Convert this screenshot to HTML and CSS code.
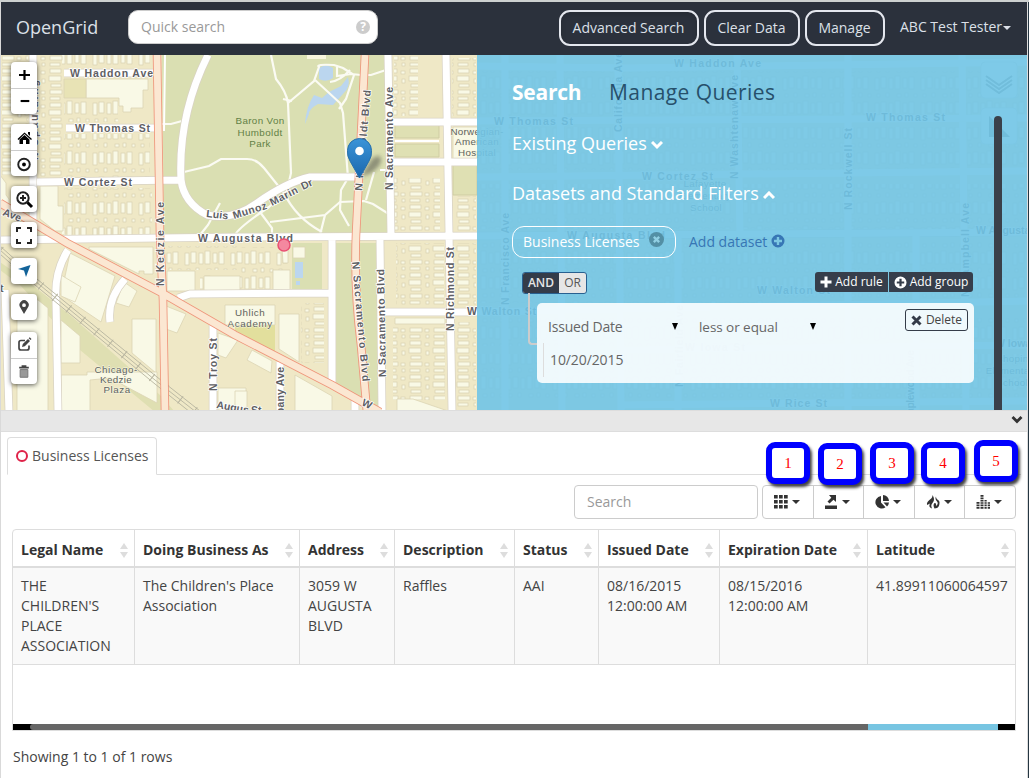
FILE: index.html
```html
<!DOCTYPE html>
<html lang="en">
<head>
<meta charset="utf-8">
<title>OpenGrid</title>
<link rel="stylesheet" href="styles.css">
</head>
<body>
<svg class="defs" width="0" height="0" aria-hidden="true">
  <defs>
    <symbol id="plus-circle" viewBox="0 0 14 14"><path fill-rule="evenodd" d="M7 .5a6.500 6.500 0 1 0 0 13a6.500 6.500 0 0 0 0-13zM5.800 3h2.400v2.800H11v2.400H8.200V11H5.800V8.200H3V5.800h2.800z"/></symbol>
  </defs>
</svg>
<div class="app">
  <header class="bar">
    <span class="brand">OpenGrid</span>
    <div class="quick"><span>Quick search</span><span class="help">?</span></div>
    <nav class="nav">
      <button class="nav-btn pressed">Advanced Search</button>
      <button class="nav-btn clear">Clear Data</button>
      <button class="nav-btn manage">Manage</button>
      <span class="user">ABC Test Tester<i class="caret"></i></span>
    </nav>
  </header>

  <main class="map-area">
    <svg class="map" viewBox="1 55 1026 355" width="1026" height="355">
      <defs>
        <pattern id="lots" width="46" height="25" patternUnits="userSpaceOnUse">
          <g class="bld"><rect x="1" y="3" width="4" height="12"/><rect x="7" y="2" width="5" height="11"/><rect x="15" y="3" width="4" height="11"/><rect x="21" y="1" width="5" height="13"/><rect x="29" y="3" width="4" height="10"/><rect x="35" y="2" width="5" height="12"/><rect x="3" y="19" width="3" height="3"/><rect x="12" y="18" width="3" height="4"/><rect x="23" y="19" width="4" height="3"/><rect x="31" y="18" width="3" height="4"/><rect x="40" y="19" width="3" height="3"/></g>
        </pattern>
        <pattern id="rows" width="24" height="34" patternUnits="userSpaceOnUse">
          <g class="bld"><rect x="2" y="1" width="11" height="4"/><rect x="1" y="8" width="12" height="5"/><rect x="3" y="16" width="10" height="3"/><rect x="2" y="22" width="12" height="4"/><rect x="2" y="29" width="10" height="3"/><rect x="17" y="3" width="4" height="3"/><rect x="18" y="11" width="3" height="4"/><rect x="17" y="23" width="4" height="3"/><rect x="18" y="29" width="3" height="3"/></g>
        </pattern>
        <linearGradient id="pin" x1="0" y1="0" x2="0" y2="1"><stop offset="0" stop-color="#3b94d8"/><stop offset="1" stop-color="#1b67ad"/></linearGradient>
        <filter id="soft" x="-50%" y="-50%" width="200%" height="200%"><feGaussianBlur stdDeviation="2"/></filter>
      </defs>
      <rect x="0" y="50" width="1029" height="362" fill="#efe8c6"/>
      <!-- park land -->
      <path class="park" d="M162 55H386L389 234L360 235L164 236z"/>
      <path class="park" d="M334 243H379L381 410H372L334 386z"/>
      <path class="park" d="M292 243h30v46h-30z"/>
      <path d="M0 262L30 283L70 315L160 395L175 412H155L80 350L20 285L0 270z" fill="#dfdfb2"/>
      <path d="M235 323h40v37l-40-26z" fill="#e2df9d"/>
      <g class="block"><path d="M395 125h44v13h-44zM395 144h44v13h-44z"/><path d="M453 165h24v30h-24z"/></g>
      <!-- building lots -->
      <g fill="url(#lots)">
        <rect x="62" y="55" width="88" height="12"/><rect x="64" y="100" width="54" height="22"/><rect x="64" y="134" width="86" height="44"/><rect x="64" y="188" width="88" height="48"/>
        <rect x="166" y="246" width="72" height="24"/><rect x="200" y="275" width="38" height="16"/><rect x="237" y="247" width="50" height="42"/><rect x="62" y="228" width="60" height="6"/>
      </g>
      <g fill="url(#rows)">
        <rect x="2" y="55" width="26" height="120"/><rect x="39" y="55" width="24" height="122"/><rect x="394" y="56" width="24" height="60"/><rect x="452" y="58" width="24" height="58"/><rect x="394" y="178" width="46" height="54"/><rect x="454" y="196" width="22" height="38"/><rect x="396" y="243" width="48" height="62"/><rect x="456" y="243" width="20" height="62"/><rect x="393" y="326" width="52" height="74"/><rect x="456" y="322" width="20" height="86"/><rect x="301" y="303" width="23" height="60"/>
      </g>
      <g class="bld">
        <path d="M86 79h62v11h-5v18h-12v4h-8v-6h-4v-8H86z"/>
        <path d="M64 79h22v19H64z" style="fill:#e8e3b5"/>
        <path d="M40 186h18v20h5v25H55l-15-12z"/><path d="M0 175l6 8v12l3 4v18l-9-10z"/>
        <path d="M89 247h64v27h-9v-3h-5v3l-50-25z"/><path d="M70 253l45 23-14 46-40-27z"/><path d="M61 275l20 12-6 15-14-6z"/><path d="M124 282l13 9-8 16-13-4z"/>
        <path d="M132 319h24v54l-24-20z"/><path d="M61 320l19 16v27H61z"/><path d="M61 375h26v-3h70v31l-47-25-20 2v34H61z"/><path d="M38 300l10 8v104H17V295z"/>
        <path d="M166 306l20 8-9 19-11-4z"/><path d="M167 271h28v20h-28z"/><path d="M204 276h36v15h-36z"/><path d="M225 305h50v20h-50z"/><path d="M279 314h20v48l-20-13z"/><path d="M273 270h17v20h-17z"/><path d="M293 247h12v11h-12z"/><path d="M252 350l20 11-1 12-24-13z"/>
        <path d="M218 333l20 7-12 18-8-3z"/><path d="M218 388h28v22h-28z"/><path d="M235 391h12v22h-12z"/><path d="M295 375l37 21v16h-37z"/><path d="M397 399h16l35 12h-51z"/><path d="M453 127h25v33h-25z"/>
        <path d="M282 248h6v15h-5z"/><path d="M395 318h50v6h-50z"/>
      </g>
      <path d="M307 55h19v4h-19z" fill="#f8f5dc"/>
      <!-- water -->
      <g fill="#bbd6ef"><path d="M319 68q7-5 14 0v10q-7 5-14 1z"/><path d="M348 77q3 10-5 17l-10 11-15-1q-9 5-9 10l-4 10q1-17 9-29l8 3 7-6 12-6z"/><path d="M295 262h8v16h-8zM296 281h4v4h-4z"/></g>
      <!-- park paths -->
      <g class="path">
        <path d="M271 55l5 24q10 12 12 24l3 70-4 18-18 16q-30 20-34 28"/><path d="M288 103l26-22 5-14q-4-3 15-2l9 3 11 7-8 24-7 10M283 99l9 2M315 80l25 23 3 10 5 65-7 12-1 20 9 16M337 66v10l14-2 10 1 10 0 15-5M330 82q10-1 20-12"/>
        <path d="M184 172l25-6 12-7h26q10 0 17 9l20 25q12 25 38 39M270 222l55-7 15-13 24-1 9 3 19 12M325 215l-5 20M366 200l8-28M162 124h9l11-3M257 208l15 20v8M220 203l-12 22-8 10"/>
      </g>
      <!-- streets: casing, then fill -->
      <g class="street-minor">
        <path d="M165 55l-1 76M395 141h44M380 170h12"/>
      </g>
      <g class="casing">
        <path d="M33 55V240M64 73h90M66 128h88M37 182l144-2M0 240l240-3 237-1 550-4M208 55q-30 60-27 125 3 23 26 35 25 6 50-12 30-21 53-26h47M388 55l3 180M446 55l6 355M391 122h86M391 162h86M384 312h93M380 240l2 170M332 240v146M178 298l12-4 142-1M213 325v87M280 362v50M355 398v14M68 250q-14 22-12 50l2 112M125 279q-18 20-15 43M5 290l4 122"/>
      </g>
      <g class="white">
        <path d="M33 55V240M64 73h90M66 128h88M37 182l144-2M0 240l240-3 237-1 550-4M208 55q-30 60-27 125 3 23 26 35 25 6 50-12 30-21 53-26h47M388 55l3 180M446 55l6 355M391 122h86M391 162h86M384 312h93M380 240l2 170M332 240v146M178 298l12-4 142-1M213 325v87M280 362v50M355 398v14M68 250q-14 22-12 50l2 112M125 279q-18 20-15 43M5 290l4 122"/>
      </g>
      <g class="rail"><path d="M0 246L37 279L157 377L200 411M0 250L35 281L155 380L196 412M0 254L35 285L155 384L190 412"/><path class="ties" d="M0 250L35 281L155 380L196 412"/></g>
      <g class="main-edge"><path d="M157 55L160 235L163 300L165 412M365 55L356 235Q354 290 361 345L367 412M0 203L67 243L162 293L235 335L332 385L380 412"/></g>
      <g class="main-fill"><path d="M157 55L160 235L163 300L165 412M365 55L356 235Q354 290 361 345L367 412M0 203L67 243L162 293L235 335L332 385L380 412"/></g>
      <!-- eastern blocks -->
      <g fill="url(#lots)"><rect x="480" y="71" width="545" height="45"/><rect x="480" y="127" width="545" height="43"/><rect x="480" y="184" width="545" height="45"/><rect x="480" y="241" width="545" height="62"/><rect x="480" y="318" width="545" height="28"/><rect x="480" y="354" width="545" height="45"/></g>
      <g class="white"><path d="M477 66l150 2 400-6M477 121l550-3M477 177l550-6M477 312l550-11M620 350l407-5M620 405l407-4M505 55v355M560 55l2 355M618 55l3 355M737 55l3 180M678 232v178M848 55v355M916 235v175M962 55l4 355"/></g>
      <!-- labels -->
      <g class="label">
        <text x="70" y="76.500" textLength="83">W Haddon Ave</text><text x="75" y="131.500" textLength="75">W Thomas St</text><text x="64" y="185.500" textLength="68">W Cortez St</text><text x="198" y="242" textLength="95">W Augusta Blvd</text><text x="467" y="315" textLength="69">W Walton St</text>
        <text transform="translate(164 286) rotate(-90)" textLength="84">N Kedzie Ave</text><text transform="translate(362 191) rotate(-85)" textLength="101">N Humboldt Blvd</text><text transform="translate(393 190) rotate(-90)" textLength="103">N Sacramento Ave</text><text transform="translate(352 262) rotate(85)" textLength="120">N Sacramento Blvd</text><text transform="translate(386 377) rotate(-91)" textLength="108">N Sacramento Blvd</text><text transform="translate(454 331) rotate(-90)" textLength="84">N Richmond St</text><text transform="translate(217 391) rotate(-90)" textLength="53">N Troy St</text><text transform="translate(284 425) rotate(-90)" textLength="58">Albany Ave</text><text transform="translate(38 160) rotate(-90)" textLength="80">N Spaulding</text>
        <text transform="translate(2 215) rotate(21)">Ave</text><text transform="translate(206 217) rotate(6)" textLength="22">Luis</text><text transform="translate(234 219) rotate(-17)" textLength="35">Munoz</text><text transform="translate(272 206) rotate(-27)" textLength="30">Marin</text><text transform="translate(303 190) rotate(-25)">Dr</text><text transform="translate(361 405) rotate(25)">W</text><text x="0" y="292">t</text><text transform="translate(216 408) rotate(10)">Augus</text><text x="251" y="414">St</text>
        <text x="674" y="67" textLength="87">W Haddon Ave</text><text x="494" y="125" textLength="79">W Thomas St</text><text x="866" y="121" textLength="79">W Thomas St</text><text x="642" y="180" textLength="71">W Cortez St</text><text x="567" y="239" textLength="98">W Augusta Blvd</text><text x="976" y="234">W Augusta</text><text x="757" y="294" textLength="73">W Walton St</text><text x="685" y="351" textLength="60">W Iowa St</text><text x="995" y="347">W Iowa</text><text x="770" y="407" textLength="57">W Rice St</text>
        <text transform="translate(622 132) rotate(-90)" textLength="80">California Ave</text><text transform="translate(738 179) rotate(-90)" textLength="104">N Washtenaw Ave</text><text transform="translate(852 210) rotate(-90)" textLength="82">N Rockwell St</text><text transform="translate(969 297) rotate(-90)" textLength="94">N Campbell Ave</text><text transform="translate(509 305) rotate(-90)" textLength="92">N Francisco Ave</text><text transform="translate(683 387) rotate(-90)" textLength="82">N Fairfield Ave</text><text transform="translate(914 422) rotate(-90)" textLength="72">Maplewood Ave</text>
      </g>
      <g class="place green"><text x="260" y="124" textLength="49">Baron Von</text><text x="260" y="135.500" textLength="45">Humboldt</text><text x="260" y="147">Park</text></g>
      <g class="place"><text x="250" y="316" textLength="30">Uhlich</text><text x="250" y="326.500" textLength="45">Academy</text><text x="116" y="373" textLength="43">Chicago-</text><text x="116" y="383" textLength="32">Kedzie</text><text x="117" y="393" textLength="27">Plaza</text><text x="477" y="135">Norwegian-</text><text x="477" y="145">American</text><text x="477" y="156">Hospital</text><text x="705" y="187">Lafayette</text><text x="705" y="199">Elementary</text><text x="706" y="211">School</text><text x="1012" y="362">Chopin</text><text x="1012" y="374">Elementary</text><text x="1012" y="386">School</text></g>
      <circle cx="284" cy="245" r="6" fill="#f4889f" stroke="#e84f72" stroke-width="1.500"/>
      <path d="M360 177l12-18q8-6 9 0t-10 14z" fill="#333" opacity=".45" filter="url(#soft)"/>
      <path d="M359.500 178L350 161Q347 156 347.500 150.500A12 12 0 0 1 371.500 150.500Q372 156 369 161z" fill="url(#pin)" stroke="#2670ad"/>
      <circle cx="359.500" cy="151" r="4.300" fill="#fff"/>
      <g class="ghost-tools"><rect x="981" y="62" width="36" height="36" rx="4"/><rect x="981" y="108" width="36" height="36" rx="4"/><path class="layers" d="M986 76l13 9 13-9M986 80l13 9 13-9M986 84l13 9 13-9"/><path class="ruler" d="M989 116v21h21z"/></g>
    </svg>

    <div class="controls">
      <div class="ctl"><svg viewBox="0 0 26 26"><path class="s3" d="M8 13h11M13.500 8v10"/></svg><svg viewBox="0 0 26 26"><path class="s3" d="M9.500 12.500h9"/></svg></div>
      <div class="ctl"><svg viewBox="0 0 26 26"><path d="M6.500 15L13.500 8.500 21 15l-1 1-6.500-6-6 6zM17 8h2v4l-2-2zM8.500 15.500l5-4.500 5 4.500V20H15v-4h-3v4H8.500z"/></svg><svg viewBox="0 0 26 26"><circle cx="13" cy="14" r="6" class="s2"/><circle cx="13" cy="14" r="2"/></svg></div>
      <div class="ctl"><svg viewBox="0 0 26 26"><circle cx="12" cy="12" r="5.700" class="s2"/><path class="s2" d="M9 12h6M12 9v6"/><path class="s3 thick" d="M16.500 16.500l4.500 4.500"/></svg></div>
      <div class="ctl"><svg viewBox="0 0 26 26"><path class="s2" d="M6 10V6h4M16 6h4v4M20 17v4h-4M10 21H6v-4"/></svg></div>
      <div class="ctl"><svg viewBox="0 0 26 26"><path fill="#136399" d="M19.500 7l-4.500 12-2-6.500-6-1.500z"/></svg></div>
      <div class="ctl"><svg viewBox="0 0 26 26"><path fill="#444" fill-rule="evenodd" d="M13 20L9.300 13.500A4.600 4.600 0 1 1 16.900 13.500zM13 9.300a1.900 1.900 0 1 0 0 3.800a1.900 1.900 0 0 0 0-3.800z"/></svg></div>
      <div class="ctl last"><svg viewBox="0 0 26 26"><path d="M14 8.500H10q-2 0-2 2V16q0 2 2 2h6q2 0 2-2v-2.500" fill="none" stroke="#444" stroke-width="1.700"/><path fill="#444" d="M11 15l.8-3L17 7l2 2-5.200 5.200zM17.700 6.300l1-1L20.500 7l-1 1z"/></svg><svg viewBox="0 0 26 26"><path fill="#444" d="M8 8h10v2H8zM10.500 6.500h5V8h-5z"/><path fill="#999" stroke="#777" d="M9 11h8v8H9z"/></svg></div>
    </div>

    <section class="panel">
      <div class="panel-tabs"><b>Search</b><span>Manage Queries</span></div>
      <h3 class="existing">Existing Queries<svg width="12" height="9" viewBox="0 0 12 9"><path d="M1 1l5 5 5-5"/></svg></h3>
      <h3 class="datasets">Datasets and Standard Filters<svg width="12" height="9" viewBox="0 0 12 9"><path d="M1 7l5-5 5 5"/></svg></h3>
      <div class="sets"><span class="pill">Business Licenses<svg width="15" height="15" viewBox="0 0 14 14"><circle cx="7" cy="7" r="7"/><path d="M4.500 4.500l5 5M9.500 4.500l-5 5"/></svg></span><a class="add-set">Add dataset<svg width="14" height="14"><use href="#plus-circle"/></svg></a></div>
      <div class="group-head"><div class="andor"><b>AND</b><span>OR</span></div>
        <div class="adders"><span class="add-rule"><svg width="12" height="12"><path d="M4.500 0.500h3v4h4v3h-4v4h-3v-4h-4v-3h4z"/></svg>Add rule</span><span class="add-group"><svg width="13" height="13"><use href="#plus-circle" width="13" height="13"/></svg>Add group</span></div></div>
      <div class="rule">
        <i class="elbow"></i>
        <div class="rule-row"><span class="sel field">Issued Date<i></i></span><span class="sel op">less or equal<i></i></span><span class="delete"><svg width="11" height="11"><path d="M1.500 1.500l8 8M9.500 1.500l-8 8"/></svg>Delete</span></div>
        <div class="value">10/20/2015</div>
      </div>
      <i class="panel-scroll"></i>
    </section>
  </main>

  <div class="divider"><svg width="12" height="10" viewBox="0 0 12 10"><path d="M1.500 2l4.500 4.500L10.500 2"/></svg></div>

  <section class="results">
    <div class="tabs"><div class="tab"><i class="ring"></i>Business Licenses</div></div>
    <div class="tools">
      <div class="filter">Search</div>
      <div class="group">
        <span><svg width="14" height="14"><path d="M0 0h3.700v3.500H0zM5 0h3.700v3.500H5zM10 0h3.700v3.500H10zM0 5h3.700v3.500H0zM5 5h3.700v3.500H5zM10 5h3.700v3.500H10zM0 10h3.700v3.500H0zM5 10h3.700v3.500H5zM10 10h3.700v3.500H10z"/></svg><i class="caret"></i></span>
        <span><svg width="14" height="14"><path d="M1 10.500h12V14H1zM5 0h7v7L9.500 4.800 5.500 8.500 3.500 6.500 7.300 2.800z"/></svg><i class="caret"></i></span>
        <span><svg width="14" height="14"><path d="M6 1v6.500l4.500 4.800A6.300 6.300 0 1 1 6 1zM8 0a6.200 6.200 0 0 1 6 6H8zM8.500 7.500H14a6 6 0 0 1-2 4z"/></svg><i class="caret"></i></span>
        <span><svg width="14" height="14"><path d="M6.500 0c2.500 4 1.500 6 0 8s-1.500 3-.5 5.500C3 12.500 3 10.500 4 8.500L1 10c-.5-2.500 1-4 3-5.500S6.500 2 6.500 0zM10 1.500c-1 2-.5 3 1 5s.5 3-1 4.500c.5-2.500-.5-3.500-1.500-3-1.500 1.500-1 3.500 0 5.500 4 0 5-3 5-6S10 5 10 1.500z"/></svg><i class="caret"></i></span>
        <span><svg width="14" height="14"><path d="M.5 7h3v1.800h-3zM.5 9.500h3v1.700h-3zM.5 12h3v1.800h-3zM4.500 0h3v1.800h-3zM4.500 2.500h3v1.800h-3zM4.500 5h3v1.500h-3zM4.500 7.200h3v1.600h-3zM4.500 9.500h3v1.700h-3zM4.500 12h3v1.800h-3zM8.500 5h2.200v1.500H8.500zM8.500 7.200h2.200v1.600H8.500zM8.500 9.500h2.200v1.700H8.500zM8.500 12h2.200v1.800H8.500zM11.700 7.200H14v1.600h-2.300zM11.700 9.500H14v1.700h-2.300zM11.700 12H14v1.800h-2.300z"/></svg><i class="caret"></i></span>
      </div>
    </div>
    <div class="grid-wrap">
      <table class="grid">
        <colgroup><col style="width:121px"><col style="width:165px"><col style="width:95px"><col style="width:120px"><col style="width:84px"><col style="width:121px"><col style="width:148px"><col style="width:148px"></colgroup>
        <thead><tr><th>Legal Name</th><th>Doing Business As</th><th>Address</th><th>Description</th><th>Status</th><th>Issued Date</th><th>Expiration Date</th><th>Latitude</th></tr></thead>
        <tbody><tr><td>THE CHILDREN'S PLACE ASSOCIATION</td><td>The Children's Place Association</td><td>3059 W AUGUSTA BLVD</td><td>Raffles</td><td>AAI</td><td>08/16/2015 12:00:00 AM</td><td>08/15/2016 12:00:00 AM</td><td>41.89911060064597</td></tr></tbody>
      </table>
      <div class="hscroll"><i></i><i class="thumb"></i><i class="track"></i><i></i></div>
    </div>
    <p class="count">Showing 1 to 1 of 1 rows</p>
  </section>

  <span class="note n1">1</span><span class="note n2">2</span><span class="note n3">3</span><span class="note n4">4</span><span class="note n5">5</span>
</div>
</body>
</html>
```
FILE: styles.css
```css
* { box-sizing: border-box; }
body { margin: 0; background: #fff; font: 14px/20px "Open Sans", sans-serif; color: #444; }
.defs { position: absolute; }
.app { position: relative; width: 1029px; height: 778px; overflow: hidden; padding-left: 1px; border-top: 2px solid #cdd1d0; background: linear-gradient(90deg, #d9d9d9 1px, #fff 1px, #fff 1027px, #ddd 1027px, #ddd 1028px, #253642 1028px); }
i { font-style: normal; }

/* top bar */
.bar { display: flex; width: 1026px; height: 53px; padding: 8px 15px 0; background: #2b313c; color: #dce0e8; }
.brand { width: 112px; font-size: 18px; line-height: 34px; white-space: nowrap; }
.quick { display: flex; justify-content: space-between; align-items: center; width: 250px; height: 34px; padding: 0 7px 0 12px; border: 1px solid #ccc; border-radius: 10px; background: #fff; color: #999; }
.help { width: 14px; height: 14px; border-radius: 50%; background: #ccc; color: #fff; font: bold 12px/14px "Open Sans", sans-serif; text-align: center; }
.nav { display: flex; gap: 5px; margin-left: 181px; }
.nav-btn { width: 140px; height: 36px; padding: 0 1px 0 0; border: 2px solid #e4e7ee; border-radius: 11px; background: transparent; color: #dce0e8; font: 14px/32px "Open Sans", sans-serif; white-space: nowrap; }
.pressed { box-shadow: inset 0 3px 5px rgba(0,0,0,.125); }
.clear { width: 96px; }
.manage { width: 80px; }
.user { margin-left: 10px; line-height: 34px; white-space: nowrap; }
.caret { display: inline-block; border: 4px solid transparent; border-top-color: currentColor; border-bottom: 0; vertical-align: middle; }
.user .caret { margin-left: 1px; }

/* map */
.map-area { position: relative; width: 1026px; height: 355px; overflow: hidden; }
.map { display: block; }
.park { fill: #dadfb2; }
.block { fill: #dfe0b3; stroke: #cfcda2; }
.bld { fill: #f9f9e6; stroke: #dcd4b4; stroke-width: .8; }
.path { fill: none; stroke: #fbfbf3; stroke-width: 2.200; }
.street-minor { fill: none; stroke: #fff; stroke-width: 2; }
.casing { fill: none; stroke: #d9d3c4; stroke-width: 8.500; }
.white { fill: none; stroke: #fff; stroke-width: 7; }
.rail { fill: none; stroke: #b7b49f; stroke-width: .9; }
.rail .ties { stroke-width: 9; stroke-dasharray: 1 17; }
.main-edge { fill: none; stroke: #ef957b; stroke-width: 8.500; }
.main-fill { fill: none; stroke: #fbe7d2; stroke-width: 6.800; }
.label { font: bold 10.500px "Liberation Sans", sans-serif; fill: #606064; stroke: #fff; stroke-width: 1.500; paint-order: stroke; }
.place { font: 9.800px "Liberation Sans", sans-serif; fill: #5d625d; text-anchor: middle; letter-spacing: .3px; stroke: #f8f7e2; stroke-width: 1; paint-order: stroke; }
.green { fill: #627f45; stroke: none; }
.ghost-tools rect { fill: #fff; stroke: #ddd; }
.layers { fill: none; stroke: #777; stroke-width: 2; }
.ruler { fill: #777; }
.controls { position: absolute; top: 7px; left: 10px; display: flex; flex-direction: column; gap: 10px; }
.ctl { display: flex; flex-direction: column; width: 26px; border-radius: 4px; background: #fff; box-shadow: 0 1px 5px rgba(0,0,0,.65); }
.ctl svg { width: 26px; height: 26px; }
.ctl svg + svg { border-top: 1px solid #ccc; }
.last { margin-top: 2px; }
.s2 { fill: none; stroke: #222; stroke-width: 2; }
.s3 { fill: none; stroke: #000; stroke-width: 2.200; }
.thick { stroke-width: 3; }

/* search panel */
.panel { position: absolute; top: 0; right: 0; width: 550px; height: 355px; padding: 22px 53px 0 35px; background: rgba(112,196,229,.9); color: #fff; white-space: nowrap; }
.panel svg { fill: currentColor; }
.panel-tabs { display: flex; height: 54px; font-size: 21px; line-height: 30px; color: #27506b; }
.panel-tabs b { width: 97px; color: #fff; letter-spacing: -.25px; }
.panel-tabs span { letter-spacing: .42px; }
.panel h3 { margin: 0; font-weight: 400; font-size: 18px; line-height: 25px; }
.panel h3 svg { margin-left: 4px; fill: none; stroke: #fff; stroke-width: 3; }
.existing { height: 50px; }
.datasets { height: 45px; }
.sets { display: flex; gap: 13px; height: 46px; line-height: 31px; }
.pill { width: 164px; height: 32px; padding-left: 10px; border: 1px solid #fff; border-radius: 12px; line-height: 30px; }
.pill svg { margin-left: 10px; fill: #538fa5; stroke: none; vertical-align: 0; }
.pill svg path { stroke: #91cfe3; stroke-width: 2.200; }
.add-set { color: #3776b5; }
.add-set svg { margin-left: 4px; vertical-align: -1px; }
.group-head { display: flex; justify-content: space-between; height: 31px; padding: 0 1px 0 10px; font-size: 12px; }
.andor { display: flex; width: 65px; height: 22px; border: 1px solid #286090; border-radius: 3px; overflow: hidden; line-height: 19px; text-align: center; background: #e6e6e6; color: #555; }
.andor b { width: 36px; background: #343c49; color: #e6e6e6; font-weight: 600; }
.andor span { flex: 1; }
.adders { display: flex; gap: 1px; height: 20px; line-height: 20px; }
.adders span { display: flex; align-items: center; justify-content: center; gap: 3px; width: 84px; background: #363e4b; }
.adders .add-rule { width: 73px; border-radius: 3px 0 0 3px; }
.adders .add-group { border-radius: 0 3px 3px 0; }
.rule { position: relative; width: 437px; height: 80px; margin-left: 25px; padding: 6px 6px 0; border-radius: 5px; background: rgba(255,255,255,.88); color: #666; }
.elbow { position: absolute; left: -9px; top: -10px; width: 9px; height: 52px; border: solid #ccc; border-width: 0 0 2px 2px; border-radius: 0 0 0 4px; }
.rule-row { display: flex; height: 34px; line-height: 36px; }
.sel { display: flex; align-items: center; justify-content: space-between; height: 36px; }
.sel i { margin-top: -2px; border: solid transparent; border-width: 7px 3px 0; border-top-color: #000; }
.field { width: 135px; padding-left: 5px; letter-spacing: -.2px; }
.op { width: 117px; margin-left: 21px; font-size: 13.500px; letter-spacing: -.05px; }
.delete { display: flex; align-items: center; justify-content: center; gap: 4px; width: 63px; height: 22px; margin-left: auto; border: 1px solid #343c49; border-radius: 3px; font-size: 12px; color: #444; }
.delete svg { stroke: #343c49; stroke-width: 3; }
.value { height: 34px; padding-left: 6px; border-left: 1px solid #ddd; line-height: 34px; letter-spacing: -.1px; }
.panel-scroll { position: absolute; right: 25px; top: 61px; width: 8px; height: 300px; border-radius: 4px; background: #3a404a; }

/* results */
.divider { display: flex; justify-content: flex-end; align-items: center; width: 1026px; height: 22px; padding: 0 4px 2px 0; background: #e7e7e7; border: solid #ddd; border-width: 1px 0; }
.divider svg { fill: none; stroke: #333; stroke-width: 2.800; }
.results { width: 1026px; padding: 5px 11px 0; }
.tabs { height: 38px; margin: 0 -5px; border-bottom: 1px solid #ddd; }
.tab { display: flex; align-items: center; gap: 4px; width: 150px; height: 38px; padding-left: 8px; border: 1px solid #ddd; border-bottom-color: #fff; border-radius: 4px 4px 0 0; background: #fff; color: #555; white-space: nowrap; }
.ring { width: 12px; height: 12px; border: 2px solid #df2349; border-radius: 50%; }
.tools { display: flex; justify-content: flex-end; gap: 4px; height: 54px; padding-top: 10px; }
.filter { width: 184px; height: 34px; padding: 6px 12px; border: 1px solid #ccc; border-radius: 4px; color: #999; }
.group { display: flex; width: 254px; height: 34px; border: 1px solid #ccc; border-radius: 4px; color: #333; }
.group span { flex: 1; display: flex; align-items: center; justify-content: center; gap: 4px; padding-right: 2px; }
.group span + span { border-left: 1px solid #ccc; }
.group svg { fill: #333; }
.grid-wrap { display: flex; flex-direction: column; justify-content: space-between; width: 1004px; height: 202px; border: 1px solid #ddd; border-radius: 4px 4px 0 0; }
.grid { width: 1002px; table-layout: fixed; border-collapse: separate; border-spacing: 0; }
.grid th { position: relative; height: 38px; padding: 3px 8px 0; border-bottom: 2px solid #ddd; color: #333; text-align: left; white-space: nowrap; }
.grid th::before, .grid th::after { content: ""; position: absolute; right: 6px; border: 4px solid transparent; }
.grid th::before { top: 13px; border-top: 0; border-bottom: 6px solid #ddd; }
.grid th::after { top: 22px; border-bottom: 0; border-top: 6px solid #ddd; }
.grid td { height: 97px; padding: 8px; border-bottom: 1px solid #ddd; background: #f9f9f9; vertical-align: top; }
.grid th + th, .grid td + td { border-left: 1px solid #ddd; }
.hscroll { display: flex; height: 6px; background: #000; }
.hscroll i { width: 17px; }
.hscroll .thumb { flex: 1; background: #666; border-radius: 3px 0 0 3px; }
.hscroll .track { width: 130px; background: #77c5e2; }
.count { margin: 16px 1px; }

/* numbered callouts */
.note { position: absolute; top: 440px; width: 44px; height: 42px; border: 6px solid #00f; border-radius: 9px; background: #fff; box-shadow: 2px 3px 3px #444; color: #f00; font: 15px/31px "Liberation Serif", serif; text-align: center; }
.n1 { left: 766px; }
.n2 { left: 818px; top: 441px; }
.n3 { left: 870px; }
.n4 { left: 921px; }
.n5 { left: 974px; top: 438px; }
```
